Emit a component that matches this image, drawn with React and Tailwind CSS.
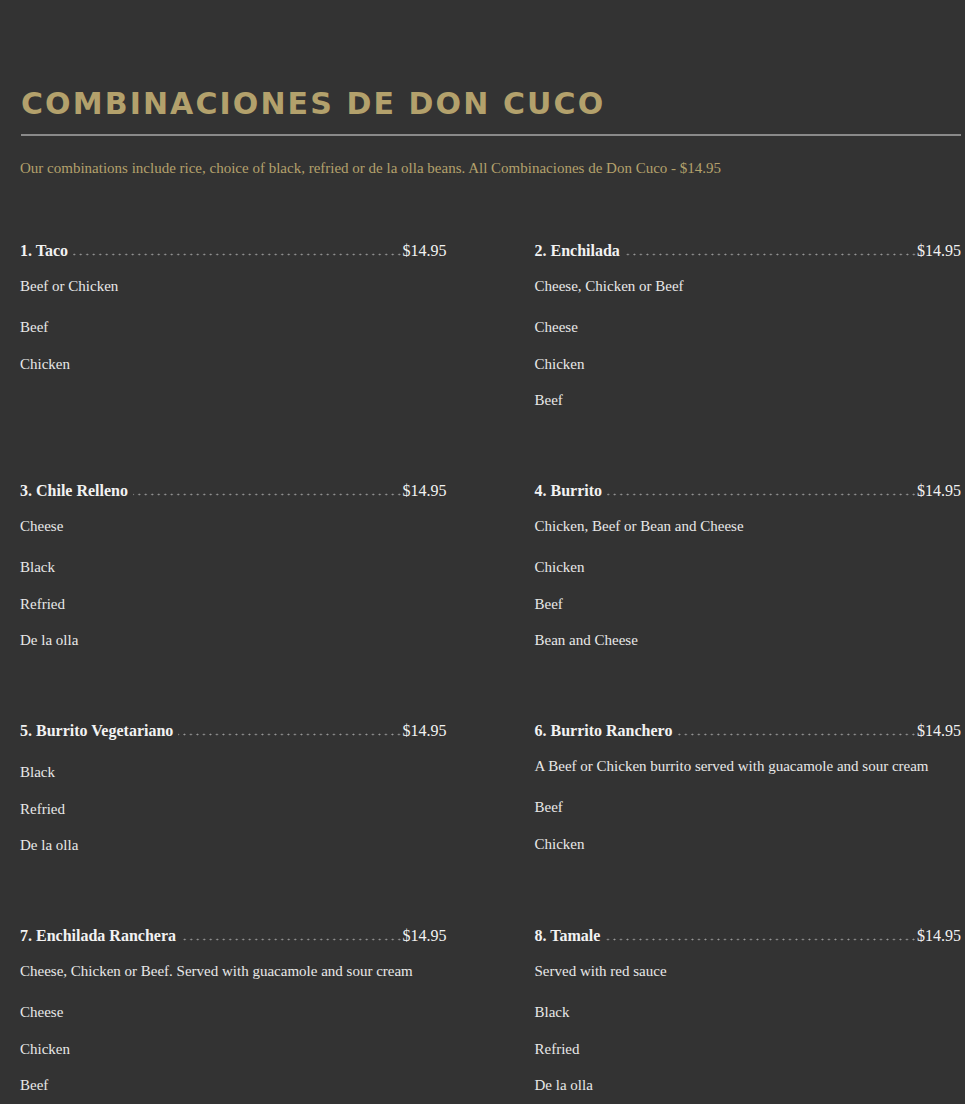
const items = [
  { name: '1. Taco', desc: 'Beef or Chicken', options: ['Beef', 'Chicken'] },
  { name: '2. Enchilada', desc: 'Cheese, Chicken or Beef', options: ['Cheese', 'Chicken', 'Beef'] },
  { name: '3. Chile Relleno', desc: 'Cheese', options: ['Black', 'Refried', 'De la olla'] },
  { name: '4. Burrito', desc: 'Chicken, Beef or Bean and Cheese', options: ['Chicken', 'Beef', 'Bean and Cheese'] },
  { name: '5. Burrito Vegetariano', desc: null, options: ['Black', 'Refried', 'De la olla'] },
  { name: '6. Burrito Ranchero', desc: 'A Beef or Chicken burrito served with guacamole and sour cream', options: ['Beef', 'Chicken'] },
  { name: '7. Enchilada Ranchera', desc: 'Cheese, Chicken or Beef. Served with guacamole and sour cream', options: ['Cheese', 'Chicken', 'Beef'] },
  { name: '8. Tamale', desc: 'Served with red sauce', options: ['Black', 'Refried', 'De la olla'] },
];

function MenuItem({ item }) {
  return (
    <div>
      <div className="flex items-end h-[20px] leading-[20px] text-[16px]">
        <span className="font-bold text-[#f2f2f2] whitespace-nowrap">{item.name}</span>
        {/* dotted leader, anchored to the price */}
        <span className="flex-1 h-[5px] mb-[4px] ml-[5px] bg-[radial-gradient(circle,#9a9a9a_0.8px,transparent_1.1px)] bg-[length:6.5px_5px] bg-repeat-x bg-right" />
        <span className="text-[#f2f2f2] whitespace-nowrap">$14.95</span>
      </div>
      {item.desc && (
        <p className="mt-[15px] text-[15px] leading-[20px] text-[#e8e8e8]">{item.desc}</p>
      )}
      <ul className="mt-[21px] flex flex-col gap-[16.5px]">
        {item.options.map(o => (
          <li key={o} className="text-[15px] leading-[20px] text-[#e8e8e8]">{o}</li>
        ))}
      </ul>
    </div>
  );
}

export default function App() {
  return (
    <div className="min-h-screen bg-[#333333] font-['Liberation_Serif',serif]">
      <div className="pl-[20px] pr-[4px] pt-[84px] pb-10">
        <h1 className="font-['DejaVu_Sans',sans-serif] font-bold text-[30px] leading-[40px] tracking-[0.07em] text-[#b3a16c] pl-[1px]">
          COMBINACIONES DE DON CUCO
        </h1>
        <div className="mt-[10px] h-[2px] bg-[#8a8a8a] ml-[1px]" />
        <p className="mt-[22px] text-[15px] leading-[20px] text-[#b3a16c]">
          Our combinations include rice, choice of black, refried or de la olla beans. All Combinaciones de Don Cuco - $14.95
        </p>
        <div className="mt-[63px] grid grid-cols-2 gap-x-[88px] gap-y-[71px] w-[941px]">
          {items.map(it => (
            <MenuItem key={it.name} item={it} />
          ))}
        </div>
      </div>
    </div>
  );
}
